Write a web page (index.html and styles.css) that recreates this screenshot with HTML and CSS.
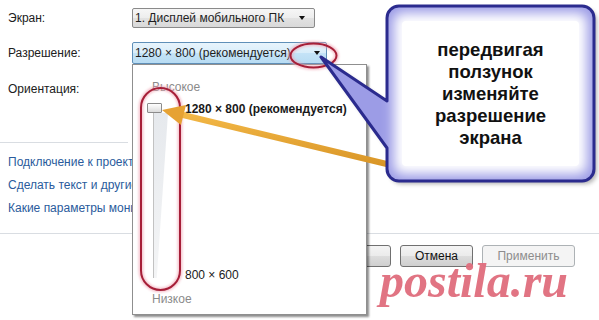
FILE: index.html
```html
<!DOCTYPE html>
<html lang="ru">
<head>
<meta charset="utf-8">
<title>Разрешение экрана</title>
<link rel="stylesheet" href="styles.css">
</head>
<body>
<div class="win">
  <div class="form">
    <div class="label">Экран:</div>
    <div class="combo c1"><span>1. Дисплей мобильного ПК</span><i class="arr"></i></div>
    <div class="label">Разрешение:</div>
    <div class="combo c2"><span>1280 × 800 (рекомендуется)</span><i class="arr"></i></div>
    <div class="label">Ориентация:</div>
    <div></div>
  </div>
  <div class="sep short"></div>
  <div class="links">
    <a>Подключение к проектору</a>
    <a>Сделать текст и другие элементы больше или меньше</a>
    <a>Какие параметры монитора следует выбрать?</a>
  </div>
  <div class="sep"></div>
  <div class="buttons">
    <button class="btn ok">ОК</button>
    <button class="btn cancel">Отмена</button>
    <button class="btn apply" disabled>Применить</button>
  </div>
</div>

<div class="panel">
  <div class="hi">Высокое</div>
  <div class="slider-row">
    <div class="slider">
      <div class="thumb"></div>
      <div class="track"></div>
    </div>
    <div class="vals">
      <div class="v bold">1280 × 800 (рекомендуется)</div>
      <div class="v">800 × 600</div>
    </div>
  </div>
  <div class="lo">Низкое</div>
</div>

<svg class="annot" width="599" height="320" viewBox="0 0 599 320">
  <defs>
    <filter id="blur5" x="-20%" y="-20%" width="140%" height="140%"><feGaussianBlur stdDeviation="6"/></filter>
    <filter id="blur2" x="-20%" y="-20%" width="140%" height="140%"><feGaussianBlur stdDeviation="2"/></filter>
    <filter id="blur1" x="-20%" y="-20%" width="140%" height="140%"><feGaussianBlur stdDeviation="1.2"/></filter>
    <linearGradient id="org" x1="0" y1="0" x2="0" y2="1">
      <stop offset="0" stop-color="#f2b746"/>
      <stop offset="1" stop-color="#d99526"/>
    </linearGradient>
    <clipPath id="callclip">
      <path d="M399 6 H582 A12 12 0 0 1 594 18 V169 A12 12 0 0 1 582 181 H399 A12 12 0 0 1 387 169 V148 L321 57 L387 101 V18 A12 12 0 0 1 399 6 Z"/>
    </clipPath>
  </defs>

  <rect x="141" y="88" width="39" height="202" rx="19.5" fill="none" stroke="#f0a0b0" stroke-width="5" opacity="0.6" filter="url(#blur1)"/>
  <rect x="141" y="88" width="39" height="202" rx="19.5" fill="none" stroke="#a61f38" stroke-width="2"/>

  <ellipse cx="313.5" cy="55.5" rx="23" ry="12" fill="none" stroke="#f0a0b0" stroke-width="5" opacity="0.6" filter="url(#blur1)"/>
  <ellipse cx="313.5" cy="55.5" rx="23" ry="12" fill="none" stroke="#a61f38" stroke-width="2"/>

  <line x1="183" y1="115" x2="395" y2="166" stroke="url(#org)" stroke-width="6" stroke-linecap="round"/>
  <circle cx="395" cy="166" r="6" fill="#e6a233"/>
  <polygon points="162,110 186,105 181,125" fill="#e6a233"/>

  <path d="M402 9 H585 A12 12 0 0 1 597 21 V172 A12 12 0 0 1 585 184 H402 A12 12 0 0 1 390 172 V151 L324 60 L390 104 V21 A12 12 0 0 1 402 9 Z" fill="#555" opacity="0.45" filter="url(#blur2)"/>
  <path d="M399 6 H582 A12 12 0 0 1 594 18 V169 A12 12 0 0 1 582 181 H399 A12 12 0 0 1 387 169 V148 L321 57 L387 101 V18 A12 12 0 0 1 399 6 Z" fill="#9c9ce6"/>
  <g clip-path="url(#callclip)">
    <rect x="394" y="13" width="193" height="161" rx="8" fill="#ffffff" filter="url(#blur5)"/>
    <rect x="402" y="21" width="177" height="145" rx="4" fill="#ffffff"/>
  </g>
  <path d="M399 6 H582 A12 12 0 0 1 594 18 V169 A12 12 0 0 1 582 181 H399 A12 12 0 0 1 387 169 V148 L321 57 L387 101 V18 A12 12 0 0 1 399 6 Z" fill="none" stroke="#2b2b8e" stroke-width="3" stroke-linejoin="round"/>
</svg>

<div class="callout-text">передвигая<br>ползунок<br>изменяйте<br>разрешение<br>экрана</div>

<div class="watermark">postila.ru</div>
</body>
</html>
```

FILE: styles.css
```css
html, body {
  margin: 0;
  padding: 0;
  background: #ffffff;
}
body {
  width: 599px;
  height: 320px;
  overflow: hidden;
  position: relative;
  font-family: "Liberation Sans", Arial, sans-serif;
  font-size: 12px;
  color: #1e1e1e;
}
.win {
  display: flex;
  flex-direction: column;
}
.form {
  display: grid;
  grid-template-columns: 124px 195px;
  grid-template-rows: 20px 22px 22px;
  row-gap: 14px;
  padding: 8px 0 0 8px;
  align-items: center;
}
.label {
  line-height: 14px;
  color: #202020;
}
.combo {
  box-sizing: border-box;
  height: 100%;
  border: 1px solid #8a8a8a;
  border-radius: 2px;
  display: flex;
  align-items: center;
  justify-content: space-between;
  padding: 0 0 0 2px;
  line-height: 14px;
  white-space: nowrap;
}
.c1 {
  width: 183px;
  background: linear-gradient(#f6f6f6 0%, #ededed 50%, #e2e2e2 51%, #d9d9d9 100%);
  padding-right: 9px;
}
.c2 {
  width: 195px;
  background: linear-gradient(#e8f4fc 0%, #d8edfa 50%, #c4e3f7 51%, #b8dcf3 100%);
  border-color: #5f8fb8;
  padding-right: 6px;
}
.arr {
  display: block;
  width: 0;
  height: 0;
  border-left: 3.5px solid transparent;
  border-right: 3.5px solid transparent;
  border-top: 4px solid #111;
}
.sep {
  height: 1px;
  background: #d9dde2;
}
.sep.short {
  width: 128px;
  margin-top: 42px;
}
.links {
  display: flex;
  flex-direction: column;
  padding: 8px 0 0 8px;
  width: 124px;
  overflow: hidden;
}
.links a {
  display: block;
  line-height: 23px;
  white-space: nowrap;
  color: #2a5b9c;
}
.links + .sep {
  margin-top: 13px;
}
.buttons {
  display: flex;
  justify-content: flex-end;
  gap: 9px;
  padding: 11px 24px 0 0;
}
.btn {
  box-sizing: border-box;
  height: 22px;
  border: 1px solid #707070;
  border-radius: 3px;
  background: linear-gradient(#f4f4f4 0%, #ebebeb 50%, #dddddd 51%, #cfcfcf 100%);
  font-family: "Liberation Sans", Arial, sans-serif;
  font-size: 12px;
  color: #111;
  padding: 0;
}
.ok { width: 75px; }
.cancel { width: 73px; }
.apply {
  width: 93px;
  border-color: #adb2b5;
  background: #f4f4f4;
  color: #8d8d8d;
}

.panel {
  position: absolute;
  left: 132px;
  top: 64px;
  width: 235px;
  height: 251px;
  box-sizing: border-box;
  border: 1px solid #8f8f8f;
  background: #fff;
  box-shadow: 2px 2px 2px rgba(0, 0, 0, 0.45);
  padding: 15px 0 0 14px;
  display: flex;
  flex-direction: column;
}
.hi, .lo {
  color: #8a8a8a;
  line-height: 14px;
  margin-left: 5px;
}
.slider-row {
  display: flex;
  height: 180px;
  margin-top: 8px;
}
.lo {
  margin-top: 10px;
}
.slider {
  width: 38px;
  display: flex;
  flex-direction: column;
}
.thumb {
  box-sizing: border-box;
  width: 15px;
  height: 10px;
  margin-top: 1px;
  border: 1px solid #8c8c8c;
  border-radius: 1px;
  background: linear-gradient(#ffffff, #dcdcdc);
}
.track {
  flex: 1;
  margin-left: 6px;
  width: 14px;
  margin-bottom: 4px;
  border-left: 1px solid #c2c2c2;
  background: linear-gradient(#e6e9ed, #f4f5f6);
  clip-path: polygon(0 0, 100% 0, 25% 100%, 0 100%);
}
.vals {
  display: flex;
  flex-direction: column;
  justify-content: space-between;
  white-space: nowrap;
}
.v {
  line-height: 14px;
  color: #1a1a1a;
}
.v.bold {
  font-weight: bold;
}

.annot {
  position: absolute;
  left: 0;
  top: 0;
  pointer-events: none;
}
.callout-text {
  position: absolute;
  left: 387px;
  top: 39px;
  width: 207px;
  text-align: center;
  font-family: "Liberation Sans", Arial, sans-serif;
  font-weight: bold;
  font-size: 18.5px;
  line-height: 22px;
  color: #111;
}
.watermark {
  position: absolute;
  left: 380px;
  top: 257px;
  font-family: "Liberation Serif", "Times New Roman", serif;
  font-weight: bold;
  font-style: italic;
  font-size: 48px;
  line-height: 48px;
  color: #e06d7d;
  opacity: 0.95;
}
```
